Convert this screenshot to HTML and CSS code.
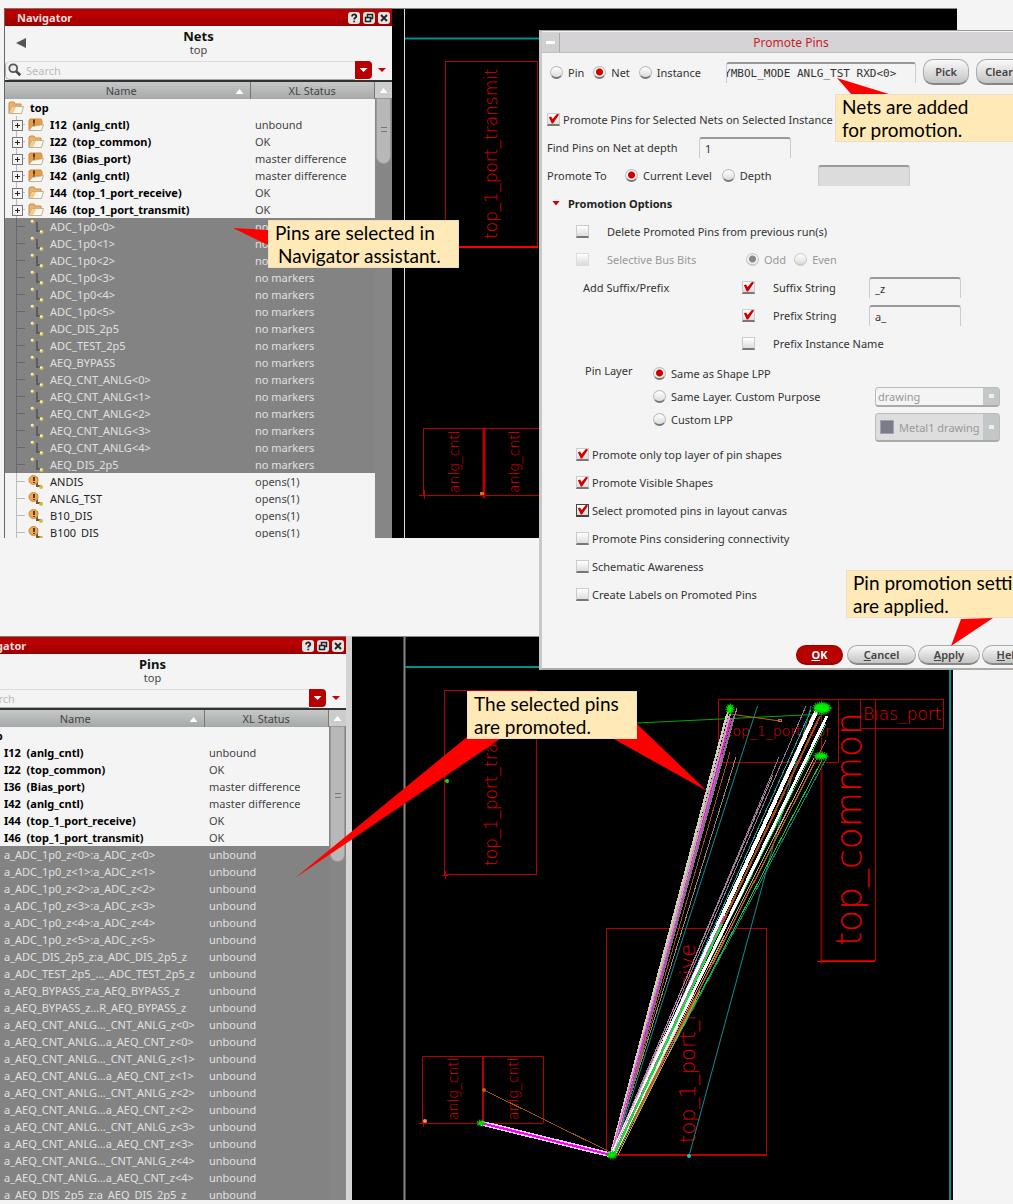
FILE: index.html
```html
<!DOCTYPE html>
<html lang="en">
<head>
<meta charset="utf-8">
<title>Promote Pins</title>
<link rel="stylesheet" href="styles.css">
</head>
<body>
<svg class="defs" aria-hidden="true">
  <symbol id="folder" viewBox="0 0 16 14">
    <path d="M1 12V2l1-1h4l1 2h6v3H5z" fill="#efb066" stroke="#c98d45"/>
    <path d="M1 12.500 4 5.500h11.500l-2 7z" fill="#fdf8ee" stroke="#c4b090"/>
    <path d="M2 12 4.500 6H8l-3 6z" fill="#f6c88a"/>
  </symbol>
  <symbol id="warn" viewBox="0 0 16 14">
    <path d="M1 12V2l1-1h11l1 2v4H5z" fill="#eb9d3e" stroke="#c98d45"/>
    <path d="M1 12.500 4 8.500l6-1 5.500-1-2 6z" fill="#fdf8ee" stroke="#c4b090"/>
    <path d="M5 1.500h2v4H5zM5 6.500h2v1H5z" fill="#5a3a12"/>
  </symbol>
  <symbol id="net" viewBox="0 0 16 16">
    <path d="M9 3v9h4" fill="none" stroke="#5c5c5c" stroke-width="2"/>
    <circle cx="4.500" cy="2.500" r="2" fill="#cdb765"/><circle cx="4" cy="2" r="1" fill="#fff"/>
    <circle cx="13.500" cy="13" r="2" fill="#d8bf3e"/><circle cx="13" cy="12.500" r="1" fill="#fff"/>
  </symbol>
  <symbol id="open" viewBox="0 0 16 16">
    <path d="M9 3v9h5" fill="none" stroke="#6a5a3a" stroke-width="2"/>
    <circle cx="5.500" cy="6" r="4.500" fill="#f0a848" stroke="#c98d45"/>
    <path d="M5 3h2v4H5zM5 8h2v1H5z" fill="#5a3a12"/>
    <circle cx="13" cy="13" r="2" fill="#e0b92e"/>
  </symbol>
</svg>
<main class="page">
  <section class="shot">
    <div class="nav">
      <header class="nav-bar"><span>Navigator</span>
        <button aria-label="Help"><svg viewBox="0 0 12 12"><path d="M4 4.500C4 1.500 8.500 2 8.300 4.500 8 6 6.200 5.800 6.200 7.500M6.200 8.800v1.500" fill="none" stroke="#222" stroke-width="1.800"/></svg></button>
        <button aria-label="Float"><svg viewBox="0 0 12 12"><path d="M4.500 5V2.500h5v4H8M2.500 5.500h5v4h-5z" fill="none" stroke="#222" stroke-width="1.500"/></svg></button>
        <button aria-label="Close"><svg viewBox="0 0 12 12"><path d="M3 3l6 6M9 3l-6 6" fill="none" stroke="#222" stroke-width="1.800"/></svg></button>
      </header>
      <div class="nav-title"><button class="back" aria-label="Back"></button><h2>Nets</h2><p>top</p></div>
      <div class="search">
        <label class="search-box"><svg viewBox="0 0 16 16"><circle cx="6" cy="6" r="4.500" fill="#e8eef0" stroke="#555" stroke-width="2"/><path d="M9.500 9.500 14 14" stroke="#444" stroke-width="3"/></svg><input type="text" placeholder="Search"></label>
        <button class="drop" aria-label="Search options"></button><button class="more" aria-label="More"></button>
      </div>
      <div class="tree">
        <table>
          <thead><tr><th>Name<i class="sort"></i></th><th>XL Status</th></tr></thead>
          <tbody>
            <tr class="root"><td><svg class="ico"><use href="#folder"/></svg>top</td><td></td></tr>
            <tr class="inst"><td><i class="plus"></i><svg class="ico"><use href="#warn"/></svg>I12&nbsp; (anlg_cntl)</td><td>unbound</td></tr>
            <tr class="inst"><td><i class="plus"></i><svg class="ico"><use href="#folder"/></svg>I22&nbsp; (top_common)</td><td>OK</td></tr>
            <tr class="inst"><td><i class="plus"></i><svg class="ico"><use href="#warn"/></svg>I36&nbsp; (Bias_port)</td><td>master difference</td></tr>
            <tr class="inst"><td><i class="plus"></i><svg class="ico"><use href="#warn"/></svg>I42&nbsp; (anlg_cntl)</td><td>master difference</td></tr>
            <tr class="inst"><td><i class="plus"></i><svg class="ico"><use href="#folder"/></svg>I44&nbsp; (top_1_port_receive)</td><td>OK</td></tr>
            <tr class="inst"><td><i class="plus"></i><svg class="ico"><use href="#folder"/></svg>I46&nbsp; (top_1_port_transmit)</td><td>OK</td></tr>
            <tr class="sel"><td><i class="dash"></i><svg class="ico"><use href="#net"/></svg>ADC_1p0&lt;0&gt;</td><td>no markers</td></tr>
            <tr class="sel"><td><i class="dash"></i><svg class="ico"><use href="#net"/></svg>ADC_1p0&lt;1&gt;</td><td>no markers</td></tr>
            <tr class="sel"><td><i class="dash"></i><svg class="ico"><use href="#net"/></svg>ADC_1p0&lt;2&gt;</td><td>no markers</td></tr>
            <tr class="sel"><td><i class="dash"></i><svg class="ico"><use href="#net"/></svg>ADC_1p0&lt;3&gt;</td><td>no markers</td></tr>
            <tr class="sel"><td><i class="dash"></i><svg class="ico"><use href="#net"/></svg>ADC_1p0&lt;4&gt;</td><td>no markers</td></tr>
            <tr class="sel"><td><i class="dash"></i><svg class="ico"><use href="#net"/></svg>ADC_1p0&lt;5&gt;</td><td>no markers</td></tr>
            <tr class="sel"><td><i class="dash"></i><svg class="ico"><use href="#net"/></svg>ADC_DIS_2p5</td><td>no markers</td></tr>
            <tr class="sel"><td><i class="dash"></i><svg class="ico"><use href="#net"/></svg>ADC_TEST_2p5</td><td>no markers</td></tr>
            <tr class="sel"><td><i class="dash"></i><svg class="ico"><use href="#net"/></svg>AEQ_BYPASS</td><td>no markers</td></tr>
            <tr class="sel"><td><i class="dash"></i><svg class="ico"><use href="#net"/></svg>AEQ_CNT_ANLG&lt;0&gt;</td><td>no markers</td></tr>
            <tr class="sel"><td><i class="dash"></i><svg class="ico"><use href="#net"/></svg>AEQ_CNT_ANLG&lt;1&gt;</td><td>no markers</td></tr>
            <tr class="sel"><td><i class="dash"></i><svg class="ico"><use href="#net"/></svg>AEQ_CNT_ANLG&lt;2&gt;</td><td>no markers</td></tr>
            <tr class="sel"><td><i class="dash"></i><svg class="ico"><use href="#net"/></svg>AEQ_CNT_ANLG&lt;3&gt;</td><td>no markers</td></tr>
            <tr class="sel"><td><i class="dash"></i><svg class="ico"><use href="#net"/></svg>AEQ_CNT_ANLG&lt;4&gt;</td><td>no markers</td></tr>
            <tr class="sel"><td><i class="dash"></i><svg class="ico"><use href="#net"/></svg>AEQ_DIS_2p5</td><td>no markers</td></tr>
            <tr><td><i class="dash"></i><svg class="ico"><use href="#open"/></svg>ANDIS</td><td>opens(1)</td></tr>
            <tr><td><i class="dash"></i><svg class="ico"><use href="#open"/></svg>ANLG_TST</td><td>opens(1)</td></tr>
            <tr><td><i class="dash"></i><svg class="ico"><use href="#open"/></svg>B10_DIS</td><td>opens(1)</td></tr>
            <tr><td><i class="dash"></i><svg class="ico"><use href="#open"/></svg>B100_DIS</td><td>opens(1)</td></tr>
          </tbody>
        </table>
        <div class="scroll"><i class="up"></i><i class="thumb"></i></div>
      </div>
    </div>
    <svg class="canvas" role="img" aria-label="Layout before promotion">
      <g transform="translate(-392 -9)" fill="none" stroke="#b40000">
        <path d="M404.500 8v531" stroke="#ddd"/>
        <path d="M405 38.500h552" stroke="#009090" stroke-width="2"/>
        <rect x="445.500" y="61.500" width="92" height="186"/><path d="M445 247h93" stroke="#f00" stroke-width="2"/>
        <path d="M423.500 495V428.500h122V495M419 495.500h126M424.500 490v9"/><path d="M484 428v70" stroke-width="3"/>
        <rect x="480" y="492" width="4" height="3" fill="#d07020" stroke="none"/>
        <g class="cad">
          <text class="s17" transform="translate(497 239) rotate(-90)">top_1_port_transmit</text>
          <text class="s14" transform="translate(459 493) rotate(-90)">anlg_cntl</text>
          <text class="s14" transform="translate(519 493) rotate(-90)">anlg_cntl</text>
        </g>
      </g>
    </svg>
  </section>

  <section class="shot second">
    <div class="nav">
      <header class="nav-bar"><span>Navigator</span>
        <button aria-label="Help"><svg viewBox="0 0 12 12"><path d="M4 4.500C4 1.500 8.500 2 8.300 4.500 8 6 6.200 5.800 6.200 7.500M6.200 8.800v1.500" fill="none" stroke="#222" stroke-width="1.800"/></svg></button>
        <button aria-label="Float"><svg viewBox="0 0 12 12"><path d="M4.500 5V2.500h5v4H8M2.500 5.500h5v4h-5z" fill="none" stroke="#222" stroke-width="1.500"/></svg></button>
        <button aria-label="Close"><svg viewBox="0 0 12 12"><path d="M3 3l6 6M9 3l-6 6" fill="none" stroke="#222" stroke-width="1.800"/></svg></button>
      </header>
      <div class="nav-title"><h2>Pins</h2><p>top</p></div>
      <div class="search">
        <label class="search-box"><svg viewBox="0 0 16 16"><circle cx="6" cy="6" r="4.500" fill="none" stroke="#555" stroke-width="2"/></svg><input type="text" placeholder="Search"></label>
        <button class="drop" aria-label="Search options"></button><button class="more" aria-label="More"></button>
      </div>
      <div class="tree">
        <table>
          <thead><tr><th>Name<i class="sort"></i></th><th>XL Status</th></tr></thead>
          <tbody>
            <tr class="root"><td><svg class="ico"><use href="#folder"/></svg>top</td><td></td></tr>
            <tr class="inst"><td><i class="plus"></i><i class="ico"></i>I12&nbsp; (anlg_cntl)</td><td>unbound</td></tr>
            <tr class="inst"><td><i class="plus"></i><i class="ico"></i>I22&nbsp; (top_common)</td><td>OK</td></tr>
            <tr class="inst"><td><i class="plus"></i><i class="ico"></i>I36&nbsp; (Bias_port)</td><td>master difference</td></tr>
            <tr class="inst"><td><i class="plus"></i><i class="ico"></i>I42&nbsp; (anlg_cntl)</td><td>master difference</td></tr>
            <tr class="inst"><td><i class="plus"></i><i class="ico"></i>I44&nbsp; (top_1_port_receive)</td><td>OK</td></tr>
            <tr class="inst"><td><i class="plus"></i><i class="ico"></i>I46&nbsp; (top_1_port_transmit)</td><td>OK</td></tr>
            <tr class="sel"><td><i class="dash"></i><i class="ico"></i>a_ADC_1p0_z&lt;0&gt;:a_ADC_z&lt;0&gt;</td><td>unbound</td></tr>
            <tr class="sel"><td><i class="dash"></i><i class="ico"></i>a_ADC_1p0_z&lt;1&gt;:a_ADC_z&lt;1&gt;</td><td>unbound</td></tr>
            <tr class="sel"><td><i class="dash"></i><i class="ico"></i>a_ADC_1p0_z&lt;2&gt;:a_ADC_z&lt;2&gt;</td><td>unbound</td></tr>
            <tr class="sel"><td><i class="dash"></i><i class="ico"></i>a_ADC_1p0_z&lt;3&gt;:a_ADC_z&lt;3&gt;</td><td>unbound</td></tr>
            <tr class="sel"><td><i class="dash"></i><i class="ico"></i>a_ADC_1p0_z&lt;4&gt;:a_ADC_z&lt;4&gt;</td><td>unbound</td></tr>
            <tr class="sel"><td><i class="dash"></i><i class="ico"></i>a_ADC_1p0_z&lt;5&gt;:a_ADC_z&lt;5&gt;</td><td>unbound</td></tr>
            <tr class="sel"><td><i class="dash"></i><i class="ico"></i>a_ADC_DIS_2p5_z:a_ADC_DIS_2p5_z</td><td>unbound</td></tr>
            <tr class="sel"><td><i class="dash"></i><i class="ico"></i>a_ADC_TEST_2p5_..._ADC_TEST_2p5_z</td><td>unbound</td></tr>
            <tr class="sel"><td><i class="dash"></i><i class="ico"></i>a_AEQ_BYPASS_z:a_AEQ_BYPASS_z</td><td>unbound</td></tr>
            <tr class="sel"><td><i class="dash"></i><i class="ico"></i>a_AEQ_BYPASS_z...R_AEQ_BYPASS_z</td><td>unbound</td></tr>
            <tr class="sel"><td><i class="dash"></i><i class="ico"></i>a_AEQ_CNT_ANLG..._CNT_ANLG_z&lt;0&gt;</td><td>unbound</td></tr>
            <tr class="sel"><td><i class="dash"></i><i class="ico"></i>a_AEQ_CNT_ANLG...a_AEQ_CNT_z&lt;0&gt;</td><td>unbound</td></tr>
            <tr class="sel"><td><i class="dash"></i><i class="ico"></i>a_AEQ_CNT_ANLG..._CNT_ANLG_z&lt;1&gt;</td><td>unbound</td></tr>
            <tr class="sel"><td><i class="dash"></i><i class="ico"></i>a_AEQ_CNT_ANLG...a_AEQ_CNT_z&lt;1&gt;</td><td>unbound</td></tr>
            <tr class="sel"><td><i class="dash"></i><i class="ico"></i>a_AEQ_CNT_ANLG..._CNT_ANLG_z&lt;2&gt;</td><td>unbound</td></tr>
            <tr class="sel"><td><i class="dash"></i><i class="ico"></i>a_AEQ_CNT_ANLG...a_AEQ_CNT_z&lt;2&gt;</td><td>unbound</td></tr>
            <tr class="sel"><td><i class="dash"></i><i class="ico"></i>a_AEQ_CNT_ANLG..._CNT_ANLG_z&lt;3&gt;</td><td>unbound</td></tr>
            <tr class="sel"><td><i class="dash"></i><i class="ico"></i>a_AEQ_CNT_ANLG...a_AEQ_CNT_z&lt;3&gt;</td><td>unbound</td></tr>
            <tr class="sel"><td><i class="dash"></i><i class="ico"></i>a_AEQ_CNT_ANLG..._CNT_ANLG_z&lt;4&gt;</td><td>unbound</td></tr>
            <tr class="sel"><td><i class="dash"></i><i class="ico"></i>a_AEQ_CNT_ANLG...a_AEQ_CNT_z&lt;4&gt;</td><td>unbound</td></tr>
            <tr class="sel"><td><i class="dash"></i><i class="ico"></i>a_AEQ_DIS_2p5_z:a_AEQ_DIS_2p5_z</td><td>unbound</td></tr>
          </tbody>
        </table>
        <div class="scroll"><i class="up"></i><i class="thumb"></i></div>
      </div>
    </div>
    <svg class="canvas" role="img" aria-label="Layout after promotion">
      <g transform="translate(-352 -637)" fill="none" stroke="#b40000">
        <path d="M404.500 636v565" stroke="#888" stroke-width="2"/>
        <path d="M405 667h545" stroke="#009090" stroke-width="2"/><path d="M950 667v534" stroke="#009090" stroke-width="2"/>
        <rect x="444.500" y="690.500" width="92" height="184"/><path d="M442 875.500h6M445.500 871v8"/>
        <rect x="718.500" y="699.500" width="120" height="63"/><rect x="860.500" y="699.500" width="83" height="29"/>
        <rect x="821.500" y="699.500" width="54" height="261"/><path d="M821.500 762v202" stroke="#800000" stroke-width="2"/><path d="M817 961.500h58" stroke="#f00"/>
        <rect x="606.500" y="928.500" width="160" height="226"/><path d="M607 1155h160" stroke-width="2"/>
        <path d="M422.500 1123V1056.500h121V1123M419 1123.500h124M423.500 1120v7"/><path d="M483 1057v66" stroke-width="2"/>
        <g class="cad">
          <text class="s17" transform="translate(497 866) rotate(-90)">top_1_port_transmit</text>
          <text class="s14" transform="translate(458 1120) rotate(-90)">anlg_cntl</text>
          <text class="s14" transform="translate(518 1120) rotate(-90)">anlg_cntl</text>
          <text class="s21" transform="translate(695 1143) rotate(-90)">top_1_port_receive</text>
          <text class="s36" transform="translate(861 946) rotate(-90)">top_common</text>
          <text class="s14" x="727" y="736">top_1_port_cpr</text>
          <text class="s17" x="863" y="720">Bias_port</text>
        </g>
        <path d="M637 723 825 714" stroke="#0a0"/>
        <path d="M730 714l50 7" stroke="#c06010"/><rect x="778.500" y="719.500" width="3" height="2" stroke="#d07020"/>
        <g stroke="#0a9090"><path d="M757.500 706 613 1155M811 706 689 1156"/></g>
        <g shape-rendering="crispEdges">
          <path d="M737 708 613 1155" stroke="#a080a0"/>
          <path d="M736 757 612 1155" stroke="#988870"/>
          <path d="M730 752 613 1155" stroke="#a05010"/>
          <path d="M734 716 613 1155" stroke="#777" stroke-width="2"/>
          <path d="M726 716 610 1155" stroke="#e8c8a0"/>
          <path d="M728 712 611 1155" stroke="#ccc" stroke-width="2"/>
          <path d="M730 714 612 1155" stroke="#b8a890" stroke-width="2"/>
          <path d="M731 718 612 1155" stroke="#e018e0" stroke-width="2"/>
          <path d="M730 716 612 1155" stroke="#c8b0a0"/>
          <path d="M722 755 611 1155" stroke="#e050e0"/>
          <path d="M806 706 612 1155M779 757 612 1155" stroke="#907890"/>
          <path d="M773 775 611 1155" stroke="#a08898"/>
          <path d="M813 714 612 1155" stroke="#a05010"/>
          <path d="M827 757 615 1155" stroke="#0a8080"/>
          <path d="M822 760 616 1155" stroke="#0c3"/>
          <path d="M817 758 616 1155M826 740 615 1155" stroke="#b06018"/>
          <path d="M814 758 614 1155" stroke="#e0a060"/>
          <path d="M820 716 613 1155" stroke="#a05010" stroke-width="2"/>
          <path d="M811 710 612 1155" stroke="#00a8a8"/>
          <path d="M824 722 613 1155" stroke="#c0c"/>
          <path d="M826 724 614 1155" stroke="#0c3"/>
          <path d="M817 710 612 1155" stroke="#fff" stroke-width="4"/>
          <path d="M827 716 614 1155" stroke="#fff" stroke-width="3"/>
          <path d="M724 916 613 1155" stroke="#f040f0"/>
          <path d="M722 924 614 1155" stroke="#0e2" stroke-width="2"/>
          <path d="M700 991 618 1155" stroke="#e09040"/>
          <path d="M682 994 612 1155" stroke="#e8b0d0"/>
          <path d="M484 1090 612 1153" stroke="#a05010"/>
          <path d="M481 1123 611 1155" stroke="#eac8ea" stroke-width="5"/>
          <path d="M481 1123 611 1155" stroke="#f0f" stroke-width="2"/>
        </g>
        <g stroke="#0b0" fill="#0e0" stroke-dasharray="1 1" stroke-width="3">
          <ellipse cx="730" cy="709" rx="3" ry="4"/><ellipse cx="822" cy="708" rx="8" ry="5"/>
          <ellipse cx="821" cy="756" rx="6" ry="3"/><ellipse cx="612" cy="1155" rx="4" ry="3"/><ellipse cx="481" cy="1123" rx="3" ry="2"/>
        </g>
        <g stroke="none"><circle cx="447" cy="781" r="2" fill="#0e0"/><circle cx="689" cy="1156" r="2" fill="#0cc"/><circle cx="425" cy="1121" r="2" fill="#e0a060"/><circle cx="484" cy="1090" r="2" fill="#c06010"/></g>
      </g>
    </svg>
  </section>

  <form class="dialog">
    <header class="dlg-bar"><button type="button" class="menu" aria-label="Window menu"></button><h1>Promote Pins</h1></header>
    <div class="row pick">
      <label><input type="radio" name="kind">Pin</label>
      <label><input type="radio" name="kind" checked>Net</label>
      <label><input type="radio" name="kind">Instance</label>
      <input class="field mono" type="text" value="YMBOL_MODE ANLG_TST RXD&lt;0&gt;" aria-label="Nets">
      <button type="button" class="btn">Pick</button><button type="button" class="btn">Clear</button>
    </div>
    <div class="row"><label class="tight"><input type="checkbox" checked>Promote Pins for Selected Nets on Selected Instance</label></div>
    <div class="row depth"><label for="depth">Find Pins on Net at depth</label><input id="depth" class="field" type="text" value="1"></div>
    <div class="row to"><span>Promote To</span>
      <label><input type="radio" name="to" checked>Current Level</label>
      <label><input type="radio" name="to">Depth</label>
      <input class="field off" type="text" disabled aria-label="Depth level"></div>
    <div class="row"><h3><i class="tri"></i>Promotion Options</h3></div>
    <div class="row in"><label class="wide"><input type="checkbox">Delete Promoted Pins from previous run(s)</label></div>
    <div class="row in dim"><label class="wide bus"><input type="checkbox" disabled>Selective Bus Bits</label>
      <label><input type="radio" name="bus" disabled checked>Odd</label><label><input type="radio" name="bus" disabled>Even</label></div>
    <div class="row in"><span class="lead">Add Suffix/Prefix</span><label class="wide str"><input type="checkbox" checked>Suffix String</label><input class="field" type="text" value="_z" aria-label="Suffix"></div>
    <div class="row in"><span class="lead"></span><label class="wide str"><input type="checkbox" checked>Prefix String</label><input class="field" type="text" value="a_" aria-label="Prefix"></div>
    <div class="row in"><span class="lead"></span><label class="wide"><input type="checkbox">Prefix Instance Name</label></div>
    <div class="layer">
      <span>Pin Layer</span>
      <div class="opts">
        <label><input type="radio" name="lpp" checked>Same as Shape LPP</label>
        <label><input type="radio" name="lpp">Same Layer. Custom Purpose</label>
        <label><input type="radio" name="lpp">Custom LPP</label>
      </div>
      <div class="combos">
        <div class="combo"><select disabled aria-label="Purpose"><option>drawing</option></select></div>
        <div class="combo big"><i class="swatch"></i><select disabled aria-label="LPP"><option>Metal1 drawing</option></select></div>
      </div>
    </div>
    <div class="row in"><label class="tight"><input type="checkbox" checked>Promote only top layer of pin shapes</label></div>
    <div class="row in"><label class="tight"><input type="checkbox" checked>Promote Visible Shapes</label></div>
    <div class="row in"><label class="tight"><input type="checkbox" class="focus" checked>Select promoted pins in layout canvas</label></div>
    <div class="row in"><label class="tight"><input type="checkbox">Promote Pins considering connectivity</label></div>
    <div class="row in"><label class="tight"><input type="checkbox">Schematic Awareness</label></div>
    <div class="row in"><label class="tight"><input type="checkbox">Create Labels on Promoted Pins</label></div>
    <footer><button type="button" class="btn ok"><u>O</u>K</button><button type="button" class="btn cancel"><u>C</u>ancel</button><button type="button" class="btn apply"><u>A</u>pply</button><button type="button" class="btn help"><u>H</u>elp</button></footer>
  </form>

  <svg class="pointers" aria-hidden="true" fill="#f00">
    <path d="M233 228 268 230v15zM837 78l55 17h-40zM951 646l10-27 32-1zM295 878 467 737h36zM707 791 612 738h25v-14z"/>
  </svg>
  <p class="note n1">Pins are selected in<br><span>Navigator assistant.</span></p>
  <p class="note n2">Nets are added<br>for promotion.</p>
  <p class="note n3">Pin promotion settings<br>are applied.</p>
  <p class="note n4">The selected pins<br>are promoted.</p>
</main>
</body>
</html>
```
FILE: styles.css
```css
* { box-sizing: border-box; }
body { margin: 0; background: #f4f4f4; color: #333; font: 11px/17px "Noto Sans", "Open Sans", sans-serif; }
h1, h2, h3, p { margin: 0; font-size: inherit; }
button, input, select { margin: 0; padding: 0; border: 0; font: inherit; color: inherit; }
.defs { position: absolute; width: 0; height: 0; }
.page { position: relative; overflow: hidden; padding: 8px 0 4px; display: flex; flex-direction: column; gap: 98px; }

/* Screens */
.shot { display: flex; align-items: stretch; padding: 0 56px 0 4px; }
.second { padding: 0 60px 0 0; }
.canvas { flex: 1; min-width: 0; height: auto; background: #000; border-top: 1px solid #888; }
.cad { fill: #e00000; stroke: none; font-family: "DejaVu Sans Light", "DejaVu Sans", sans-serif; font-weight: 200; }
.s14 { font-size: 14px; }
.s17 { font-size: 17px; }
.s21 { font-size: 21px; }
.s36 { font-size: 36px; }

/* Navigator */
.nav { width: 388px; flex: none; display: flex; flex-direction: column; background: #f4f4f4; border-left: 1px solid #666; }
.second .nav { width: 394px; margin-left: -42px; border-right: 6px solid #d4d4d4; }
.nav-bar { height: 18px; display: flex; align-items: center; gap: 3px; padding: 0 2px 0 12px; color: #f0dede; font-weight: 700; background: linear-gradient(#b80000 40%, #980000); border-top: 1px solid #777; }
.nav-bar span { flex: 1; }
.nav-bar button { width: 12px; height: 12px; border-radius: 3px; background: #e4e4e4; }
.nav-bar svg { display: block; width: 12px; height: 12px; }
.nav-title { position: relative; height: 34px; text-align: center; padding-top: 3px; line-height: 14px; color: #111; }
.nav-title h2 { font-size: 13px; }
.nav-title p { color: #444; }
.back { position: absolute; left: 11px; top: 12px; width: 10px; height: 10px; background: #555; clip-path: polygon(0 50%, 100% 0, 100% 100%); }
.search { height: 20px; display: flex; align-items: center; }
.search-box { flex: 1; height: 19px; display: flex; align-items: center; gap: 4px; padding-left: 2px; border: 1px solid #aaa; border-top-color: #ddd; border-right: 0; border-radius: 5px 0 0 5px; }
.search-box svg { width: 14px; height: 14px; flex: none; }
.search-box input { flex: 1; min-width: 0; height: 15px; background: none; }
.search-box input::placeholder { color: #bbb; opacity: 1; }
.drop { width: 17px; height: 18px; border-radius: 0 4px 4px 0; background: #b80000; position: relative; }
.drop::after, .more::after { content: ""; display: block; margin: auto; width: 8px; height: 4px; background: #fff; clip-path: polygon(0 0, 100% 0, 50% 100%); }
.more { width: 20px; height: 18px; background: none; }
.more::after { background: #c00; }
.tree { flex: none; height: 458px; display: flex; align-items: flex-start; overflow: hidden; border-top: 2px solid #333; }
.second .tree { height: 492px; }
table { width: 370px; border-collapse: collapse; table-layout: fixed; }
th { height: 17px; padding: 0; font-weight: 400; color: #444; background: linear-gradient(#c6c8c8, #a6a9a9); border-right: 1px solid #777; position: relative; }
th:first-child { width: 245px; padding-right: 12px; }
.sort { position: absolute; right: 6px; top: 7px; width: 8px; height: 5px; background: #fff; clip-path: polygon(50% 0, 100% 100%, 0 100%); }
td { height: 17px; padding: 0 0 0 5px; white-space: nowrap; line-height: 17px; color: #444; }
td:first-child { display: flex; align-items: center; padding-left: 6px; color: #222; }
.ico { width: 16px; height: 16px; flex: none; margin-right: 6px; }
.root td:first-child { padding-left: 3px; }
.root td:first-child, .inst td:first-child { font-weight: 700; color: #000; }
.plus, .dash { flex: none; width: 17px; height: 17px; position: relative; background: linear-gradient(#bbb, #bbb) 5px 0 / 1px 100% no-repeat, linear-gradient(#bbb, #bbb) 5px 8px / 9px 1px no-repeat; }
.sel .dash { background: linear-gradient(#686868, #686868) 5px 0 / 1px 100% no-repeat, linear-gradient(#686868, #686868) 5px 8px / 9px 1px no-repeat; }
.plus::before { content: ""; position: absolute; left: 1px; top: 4px; width: 9px; height: 9px; border: 1px solid #777; background: linear-gradient(#222, #222) center / 5px 1px no-repeat, linear-gradient(#222, #222) center / 1px 5px no-repeat, #f4f4f4; }
.sel { background: #838383; }
.sel td, .sel td:first-child { color: #e0e0e0; }
.scroll { flex: 1; align-self: stretch; background: #868686; display: flex; flex-direction: column; }
.up { height: 16px; background: #ccc; }
.up::before { content: ""; display: block; width: 8px; height: 5px; margin: 6px auto 0; background: #fff; clip-path: polygon(50% 0, 100% 100%, 0 100%); }
.thumb { height: 66px; margin: 0 1px; border: 1px solid #999; border-radius: 0 0 8px 8px; background: linear-gradient(#777, #777) center 28px / 6px 1px no-repeat, linear-gradient(#777, #777) center 32px / 6px 1px no-repeat, #b8b8b8; }
.second .thumb { height: 136px; background-position: center 66px, center 70px, 0 0; }

/* Promote Pins window */
.dialog { position: absolute; left: 539px; top: 30px; width: 504px; padding-bottom: 3px; background: #f4f4f4; border: 1px solid #eee; border-left: 3px solid #c8c8c8; border-bottom: 2px solid #aaa; border-top-color: #999; }
.dlg-bar { height: 21px; margin-top: 1px; display: flex; align-items: center; background: #d6d3d6; color: #c81e28; border-bottom: 1px solid #c0c0c0; font-size: 12px; }
.dlg-bar h1 { flex: 1; text-align: center; font-weight: 400; padding-right: 20px; }
.menu { width: 18px; height: 19px; border-right: 1px solid #aaa; background: linear-gradient(#fff, #fff) center / 9px 3px no-repeat, #d0d0d0; }
.row { height: 28px; display: flex; align-items: center; padding-left: 5px; white-space: nowrap; }
.row label, .opts label { display: flex; align-items: center; gap: 5px; }
.pick { height: 38px; padding-left: 8px; gap: 9px; margin-bottom: 14px; }
.pick .field { width: 190px; margin: 0 0 0 16px; }
.pick .btn { margin-left: -2px; height: 26px; width: 46px; }
.row .tight { gap: 3px; }
.field { width: 92px; height: 21px; padding: 0 5px; background: none; border: 1px solid #ccc; border-top: 2px solid #999; border-bottom: 0; border-radius: 3px 3px 0 0; }
.mono { font-family: "DejaVu Sans Mono", monospace; padding: 0; text-indent: -3px; }
.depth label { width: 152px; }
.to span { width: 78px; }
.to label { margin-right: 10px; }
.to .field { margin-left: 36px; }
.field.off { background: #dcdcdc; }
h3 { font-weight: 700; color: #222; display: flex; align-items: center; gap: 8px; padding-left: 5px; }
.tri { width: 8px; height: 5px; background: #c00; clip-path: polygon(0 0, 100% 0, 50% 100%); }
.in { padding-left: 34px; }
.row .wide { gap: 18px; }
.dim { color: #999; }
.row .bus { width: 170px; }
.dim label + label { margin-right: 8px; }
.lead { width: 166px; padding-left: 7px; }
.row .str { width: 127px; }
input[type="radio"], input[type="checkbox"] { appearance: none; flex: none; width: 13px; height: 13px; }
input[type="radio"] { border-radius: 50%; border: 1px solid #bbb; border-bottom: 2px solid #777; background: linear-gradient(#fff, #ddd); }
input[type="radio"]:checked { background: radial-gradient(circle, #c00 3px, #f0f0f0 4px); }
input[type="radio"]:disabled { border-color: #ccc; }
input[type="radio"]:disabled:checked { background: radial-gradient(circle, #888 3px, #f0f0f0 4px); }
input[type="checkbox"] { border: 1px solid #ccc; border-bottom: 2px solid #777; background: linear-gradient(#fff, #ddd); }
input[type="checkbox"]:disabled { border-color: #ddd; }
input[type="checkbox"]:checked::before { content: ""; display: block; width: 11px; height: 10px; background: #d00000; clip-path: polygon(8% 38%, 28% 30%, 42% 55%, 84% 0, 100% 12%, 46% 100%, 34% 100%); }
input[type="checkbox"].focus { border: 1px solid #444; border-bottom-width: 2px; }
.layer { display: flex; align-items: flex-start; padding: 5px 0 4px 43px; height: 83px; }
.layer > span { width: 68px; line-height: 18px; }
.opts { width: 222px; }
.opts label { height: 23px; }
.combos { display: flex; flex-direction: column; gap: 6px; padding-top: 25px; }
.combo { display: flex; align-items: center; width: 125px; height: 20px; padding-left: 2px; color: #999; border: 1px solid #bbb; border-bottom: 2px solid #aaa; border-radius: 4px; background: linear-gradient(90deg, transparent 107px, #c4c7c7 107px); position: relative; }
.combo::after { content: ""; position: absolute; right: 5px; top: 6px; width: 5px; height: 4px; background: #eee; }
.combo select { appearance: none; flex: 1; min-width: 0; background: none; opacity: 1; color: #999; }
.combo.big { height: 29px; gap: 5px; padding-left: 4px; background: linear-gradient(90deg, #dedede 107px, #c4c7c7 107px); }
.combo.big::after { top: 11px; }
.swatch { width: 14px; height: 14px; background: #7c7c88; border: 1px solid #a0a0b8; }
.btn { height: 20px; color: #444; border: 1px solid #aaa; border-bottom: 2px solid #888; border-radius: 10px; background: linear-gradient(#fafafa, #c4c4c4); font-weight: 600; line-height: 16px; }
footer { display: flex; gap: 2px; padding: 37px 0 0 254px; }
.ok { width: 47px; background: #b80000; border-color: #900; color: #fff; font-weight: 700; margin-right: 2px; }
.cancel { width: 69px; }
.apply { width: 62px; }
.help { width: 54px; }

/* Callouts */
.pointers { position: absolute; inset: 0; width: 100%; height: 100%; pointer-events: none; }
.note { position: absolute; min-height: 47px; padding-left: 6px; background: #ffe9b7; border: 1px solid #eadfc4; color: #000; font: 19px/24px Lato, sans-serif; line-height: 23px; white-space: nowrap; }
.n1 { left: 268px; top: 220px; width: 191px; }
.n1 span { padding-left: 3px; }
.n2 { left: 835px; top: 94px; width: 200px; }
.n3 { left: 846px; top: 570px; width: 210px; }
.n4 { left: 467px; top: 691px; width: 170px; }
```
